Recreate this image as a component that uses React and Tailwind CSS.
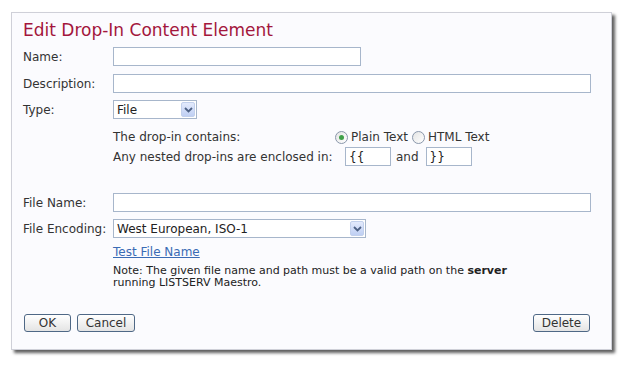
import React from 'react';

const font = { fontFamily: '"DejaVu Sans", Verdana, sans-serif' };

const TextBox = ({ className = '', value = '' }) => (
  <div className={`h-[19px] border border-[#a7b6cb] bg-white flex items-center px-[3px] text-[12px] text-[#222] ${className}`}>
    {value}
  </div>
);

const Chevron = () => (
  <div className="w-[14px] h-[15px] mr-[1px] rounded-[2px] border border-[#c2d0ec] bg-gradient-to-b from-[#e3eafc] to-[#bfcff3] flex items-center justify-center">
    <svg width="9" height="6" viewBox="0 0 9 6">
      <path d="M1 1 L4.5 4.5 L8 1" fill="none" stroke="#4d6185" strokeWidth="1.8" />
    </svg>
  </div>
);

const Select = ({ className = '', value }) => (
  <div className={`h-[19px] border border-[#a7b6cb] bg-white flex items-center justify-between pl-[3px] text-[12px] text-[#222] ${className}`}>
    <span>{value}</span>
    <Chevron />
  </div>
);

const Radio = ({ checked }) => (
  <span className="inline-flex w-[13px] h-[13px] rounded-full border border-[#8a97ab] bg-gradient-to-br from-[#e4e4e4] to-white items-center justify-center">
    {checked && <span className="w-[5px] h-[5px] rounded-full bg-[#3fa048]" />}
  </span>
);

const Button = ({ children, className = '' }) => (
  <div className={`h-[18px] rounded-[3px] border border-[#4f6886] bg-gradient-to-b from-white to-[#e4e4e4] flex items-center justify-center text-[12px] text-[#333] ${className}`}>
    {children}
  </div>
);

const Row = ({ label, children, className = '' }) => (
  <div className={`flex items-center ${className}`}>
    <div className="w-[90px] text-[12px] text-[#333]">{label}</div>
    {children}
  </div>
);

export default function App() {
  return (
    <div className="w-[629px] h-[383px] bg-white pl-[11px] pt-[12px]" style={font}>
      <div className="w-[601px] h-[338px] border border-[#cfd0d8] bg-[#fbfbfe] shadow-[3px_3px_3px_#5f5f5f] pl-[11px] pr-[20px] flex flex-col">
        <div className="mt-[5px] h-[24px] text-[17px] leading-[24px] text-[#a3163c]">Edit Drop-In Content Element</div>

        <Row label="Name:" className="mt-[5px]">
          <TextBox className="w-[248px]" />
        </Row>
        <Row label="Description:" className="mt-[8px]">
          <TextBox className="w-[478px]" />
        </Row>
        <Row label="Type:" className="mt-[7px]">
          <Select className="w-[84px]" value="File" />
        </Row>

        <div className="ml-[90px] mt-[10px] flex items-center h-[16px] text-[12px] text-[#333]">
          <span className="w-[222px]">The drop-in contains:</span>
          <Radio checked />
          <span className="ml-[3px]">Plain Text</span>
          <span className="ml-[4px] inline-flex"><Radio /></span>
          <span className="ml-[3px]">HTML Text</span>
        </div>
        <div className="ml-[90px] mt-[2px] flex items-center text-[12px] text-[#333]">
          <span className="w-[232px]">Any nested drop-ins are enclosed in:</span>
          <TextBox className="w-[46px]" value="{{" />
          <span className="ml-[5px] mr-[7px]">and</span>
          <TextBox className="w-[46px]" value="}}" />
        </div>

        <Row label="File Name:" className="mt-[27px]">
          <TextBox className="w-[478px]" />
        </Row>
        <Row label="File Encoding:" className="mt-[7px]">
          <Select className="w-[253px]" value="West European, ISO-1" />
        </Row>

        <div className="ml-[90px] mt-[5px] text-[12px] text-[#3a6bb5] underline">Test File Name</div>
        <div className="ml-[90px] mt-[4px] text-[11px] leading-[12px] text-[#222]">
          Note: The given file name and path must be a valid path on the <b>server</b>
          <br />
          running LISTSERV Maestro.
        </div>

        <div className="mt-[25px] flex items-center">
          <Button className="w-[47px] ml-[1px]">OK</Button>
          <Button className="w-[58px] ml-[6px]">Cancel</Button>
          <div className="flex-1" />
          <Button className="w-[57px] mr-[1px]">Delete</Button>
        </div>
      </div>
    </div>
  );
}
